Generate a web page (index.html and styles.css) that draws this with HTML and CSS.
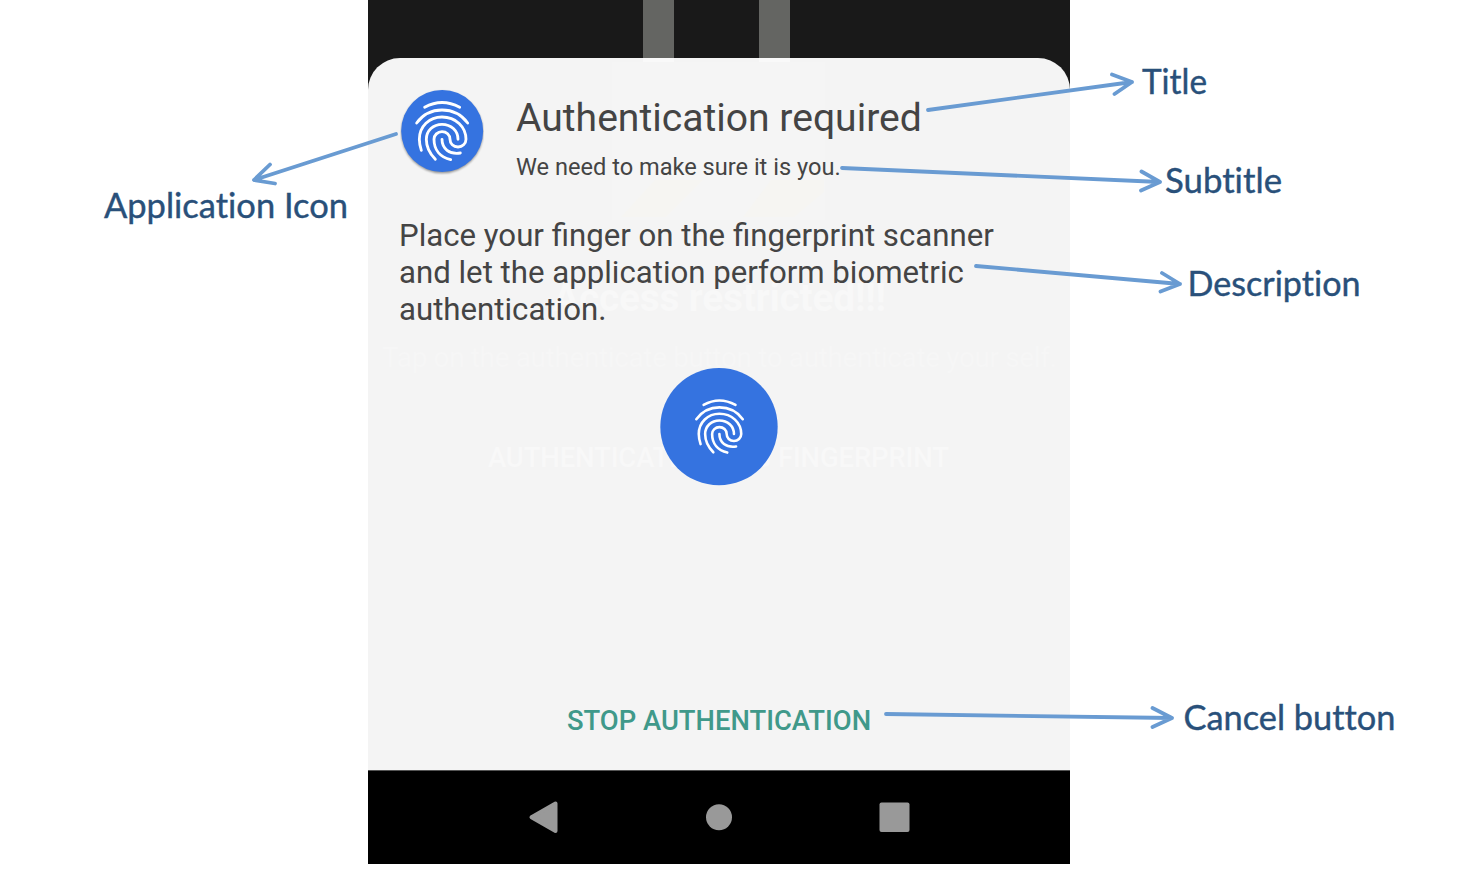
FILE: index.html
```html
<!DOCTYPE html>
<html lang="en">
<head>
<meta charset="utf-8">
<title>Biometric prompt</title>
<link rel="stylesheet" href="styles.css">
</head>
<body>
<div class="stage">
  <div class="phone">
    <div class="backdrop"><span class="pillar"></span><span class="pillar"></span></div>
    <main class="sheet">
      <svg class="ghost" viewBox="368 58 702 712" aria-hidden="true">
        <path class="ghost-panel" d="M612 62h213v158H612z"/>
        <path class="ghost-bar" d="M643 58h31v4h-31zM759 58h31v4h-31z"/>
        <path class="ghost-stripe" d="M655 180h48l-37 37h-45zM771 180h53v12l-30 25h-51z"/>
        <text class="ghost-title" x="553" y="311" textLength="333">Access restricted!!!</text>
        <text class="ghost-line" x="382" y="367" textLength="675">Tap on the authenticate button to authenticate your self.</text>
        <text class="ghost-button" x="488" y="467" textLength="461">AUTHENTICATE USING FINGERPRINT</text>
      </svg>
      <header class="head">
        <svg class="app-icon" viewBox="30 27 252 258">
          <circle class="shadow" cx="156.500" cy="157" r="123"/>
          <circle class="disc" cx="156.500" cy="153" r="123"/>
          <g id="print" class="print">
            <path d="M104 82Q156 53 209 82"/>
            <path d="M80 129C99 103 125 90 156 90C188 90 214 103 233 129"/>
            <path d="M94 211C90 199 88 190 88 178C88 139 118 111 156 111C197 111 228 140 228 178C228 191 217 201 204 201C190 201 180 191 180 178C180 164 169 155 156 155C143 155 132 165 132 178C132 210 151 232 182 239"/>
            <path d="M136 238C117 219 109 200 109 178C109 152 130 133 156 133C183 133 204 152 204 178"/>
            <path d="M156 178C156 206 178 224 211 219"/>
          </g>
        </svg>
        <div class="titles">
          <h1 class="title">Authentication required</h1>
          <p class="subtitle">We need to make sure it is you.</p>
        </div>
      </header>
      <p class="description">Place your finger on the fingerprint scanner<br>and let the application perform biometric<br>authentication.</p>
      <svg class="sensor" viewBox="31 24 352 352">
        <circle class="disc" cx="207" cy="199" r="175"/>
        <use href="#print" transform="translate(67 60) scale(.905)"/>
      </svg>
      <button class="cancel">STOP AUTHENTICATION</button>
    </main>
    <nav class="nav">
      <svg viewBox="528 800 32 34"><path class="key joined" d="M555.500 803.500v27.500L531.500 817.300z"/></svg>
      <svg viewBox="703 800 32 34"><circle class="key" cx="719" cy="817.200" r="13"/></svg>
      <svg viewBox="878 800 32 34"><rect class="key" x="879.500" y="802.500" width="30" height="29.500" rx="2"/></svg>
    </nav>
  </div>
  <svg class="callouts" viewBox="0 0 1468 896">
    <g class="arrows">
      <path d="M396 134L254 180M270 164.500L254 180L275 183.500"/>
      <path d="M928 110L1132 82M1112 74.500L1132 82L1114.500 94"/>
      <path d="M842 168L1160 182M1141.500 171.500L1160 182L1141 190.500"/>
      <path d="M976 266L1180 284M1162 273L1180 284L1160.500 291.500"/>
      <path d="M886 714L1172 718M1152.500 708L1172 718L1152.500 727"/>
    </g>
    <g class="labels">
      <text x="104" y="218" textLength="244" lengthAdjust="spacingAndGlyphs">Application Icon</text>
      <text x="1142" y="94" textLength="65" lengthAdjust="spacingAndGlyphs">Title</text>
      <text x="1165" y="193" textLength="117" lengthAdjust="spacingAndGlyphs">Subtitle</text>
      <text x="1187.500" y="296" textLength="173" lengthAdjust="spacingAndGlyphs">Description</text>
      <text x="1183.500" y="730" textLength="212" lengthAdjust="spacingAndGlyphs">Cancel button</text>
    </g>
  </svg>
</div>
</body>
</html>
```

FILE: styles.css
```css
* { box-sizing: border-box; margin: 0; padding: 0; }
body { background: #fff; font-family: Roboto, sans-serif; color: #444; }
svg { display: block; }
.stage { position: relative; width: 1468px; height: 896px; overflow: hidden; }
.phone { width: 702px; height: 864px; margin-left: 368px; background: #191919; display: flex; flex-direction: column; }
.backdrop { height: 58px; display: flex; gap: 85px; padding-left: 275px; }
.pillar { width: 31px; background: #646562; }
.sheet { position: relative; height: 712px; background: #f4f4f4; border-radius: 32px 32px 0 0; padding: 31px 32px 0; display: flex; flex-direction: column; align-items: flex-start; overflow: hidden; }
.sheet > :not(.ghost) { position: relative; }
.ghost { position: absolute; inset: 0; width: 702px; height: 712px; }
.ghost text { fill: #f8f8f8; }
.ghost-title { font-size: 39px; font-weight: 700; }
.ghost .ghost-line { font-size: 28px; fill: #f6f6f6; }
.ghost-button { font-size: 27.5px; font-weight: 500; }
.ghost-panel { fill: #f5f5f5; }
.ghost-bar { fill: #f9f9f9; }
.ghost-stripe { fill: #f6f5f2; }
.head { display: flex; gap: 32px; height: 128px; }
.app-icon { width: 84px; height: 86px; }
.shadow { fill: #000; opacity: .4; filter: blur(3px); }
.disc { fill: #3573e0; }
.print { fill: none; stroke: #fff; stroke-width: 8.500; stroke-linecap: round; stroke-linejoin: round; }
.titles { padding-top: 6px; }
.title { font-size: 39.1px; font-weight: 400; line-height: 47px; white-space: nowrap; }
.subtitle { font-size: 23.6px; line-height: 28px; margin-top: 11px; white-space: nowrap; }
.description { font-size: 31.2px; line-height: 37px; margin-left: -1px; white-space: nowrap; }
.sensor { width: 118px; height: 118px; align-self: center; margin-top: 40px; }
.cancel { align-self: center; margin-top: 219px; border: 0; background: none; color: #40998a; font: 500 27.4px/33px Roboto, sans-serif; white-space: nowrap; }
.nav { height: 94px; background: #000; border-top: 1px solid #555; display: flex; justify-content: space-between; align-items: flex-start; padding: 29px 160px 0; }
.nav svg { width: 32px; height: 34px; }
.key { fill: #999; }
.joined { stroke: #999; stroke-width: 4; stroke-linejoin: round; }
.callouts { position: absolute; inset: 0; width: 1468px; height: 896px; pointer-events: none; }
.arrows { fill: none; stroke: #699bd2; stroke-width: 3.800; stroke-linecap: round; stroke-linejoin: round; }
.labels { font: 400 34px Lato, sans-serif; font-variant-ligatures: none; fill: #29507a; stroke: #29507a; stroke-width: .4; }
```
